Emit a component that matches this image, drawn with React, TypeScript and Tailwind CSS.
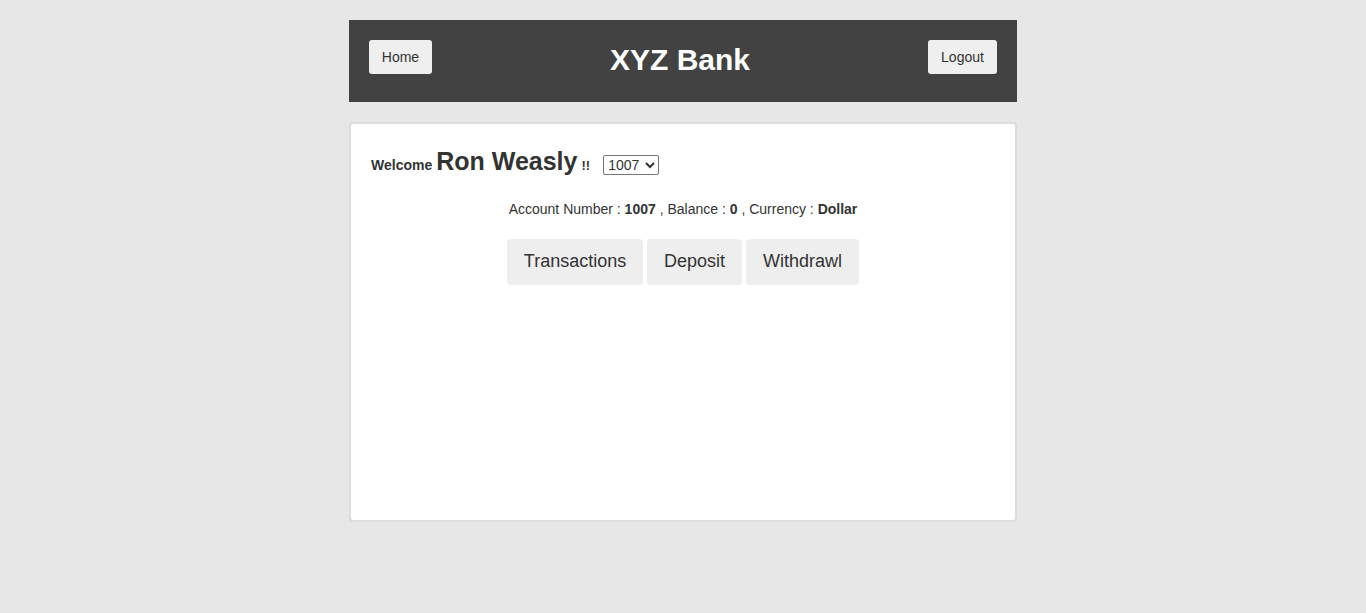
import React from "react";

export default function App() {
  return (
    <div className="min-h-[613px] bg-[#e7e7e7] pt-[20px] text-[#333]" style={{ fontFamily: '"Liberation Sans", Arial, sans-serif' }}>
      <div className="mx-auto w-[668px]">
        <div className="flex h-[82px] items-start justify-between bg-[#424242] px-[20px] pt-[20px]">
          <button className="h-[34px] w-[63px] rounded-[3px] bg-[#efefef] text-[14px] text-[#333]">Home</button>
          <div className="mt-[2px] text-[30px] font-bold leading-[36px] text-white">XYZ Bank</div>
          <button className="h-[34px] w-[69px] rounded-[3px] bg-[#efefef] text-[14px] text-[#333]">Logout</button>
        </div>
        <div className="mt-[20px] h-[400px] rounded-[4px] border-2 border-[#ddd] bg-white px-[20px]">
          <div className="mt-[19px] flex items-baseline">
            <span className="text-[14px] font-bold">Welcome</span>
            <span className="ml-[4px] text-[25px] font-bold">Ron Weasly</span>
            <span className="ml-[4px] text-[13px] font-bold">!!</span>
            <select className="ml-[13px] h-[20px] w-[56px] rounded-[2px] border border-[#767676] bg-white text-[14px] text-[#333]" defaultValue="1007">
              <option>1007</option>
              <option>1008</option>
              <option>1009</option>
            </select>
          </div>
          <div className="mt-[18px] text-center text-[14px]">
            Account Number : <b>1007</b> , Balance : <b>0</b> , Currency : <b>Dollar</b>
          </div>
          <div className="mt-[19px] flex justify-center gap-[4px]">
            <button className="h-[46px] w-[136px] rounded-[4px] bg-[#eee] text-[18px] text-[#333]">Transactions</button>
            <button className="h-[46px] w-[95px] rounded-[4px] bg-[#eee] text-[18px] text-[#333]">Deposit</button>
            <button className="h-[46px] w-[113px] rounded-[4px] bg-[#eee] text-[18px] text-[#333]">Withdrawl</button>
          </div>
        </div>
      </div>
    </div>
  );
}
